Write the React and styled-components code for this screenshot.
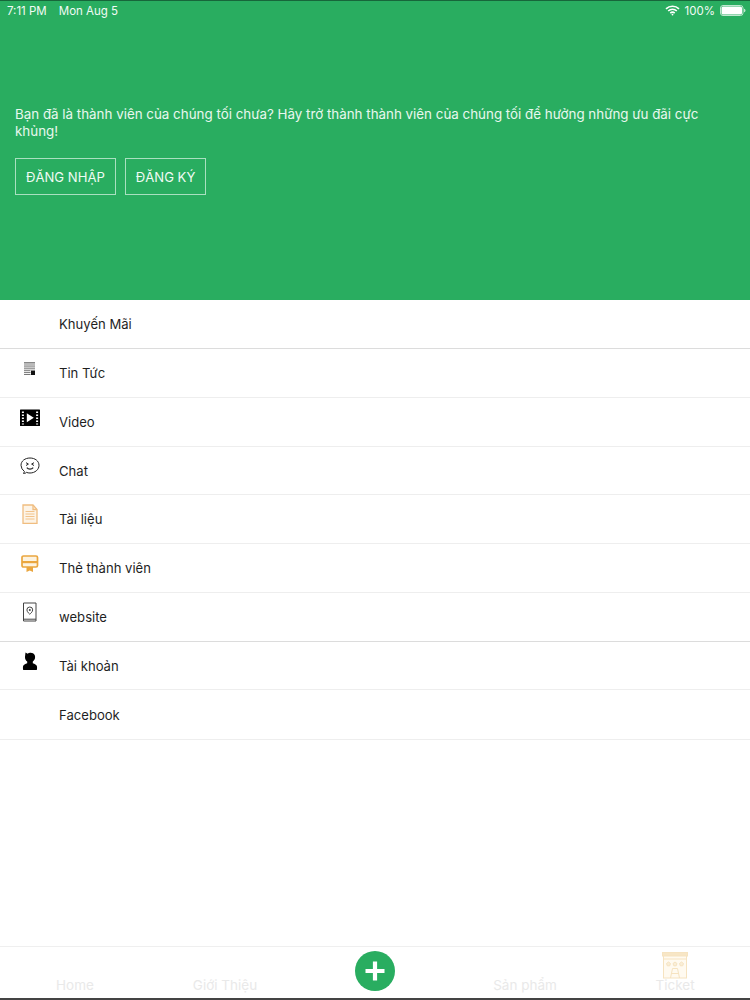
import React from "react";
import styled, { createGlobalStyle } from "styled-components";

const Global = createGlobalStyle`
  html, body { margin: 0; padding: 0; background: #fff; }
  * { box-sizing: border-box; }
`;
const Page = styled.div`
  width: 750px; height: 1000px; display: flex; flex-direction: column; overflow: hidden;
  font-family: "Inter", "Liberation Sans", sans-serif; background: #fff;
`;
const Hero = styled.header`
  height: 300px; flex: none; background: #29ad60; color: #fff; display: flex; flex-direction: column;
  border-top: 1px solid #17663a;
`;
const StatusBar = styled.div`
  height: 19px; padding: 0 4px 0 7px; display: flex; align-items: center; justify-content: space-between;
  font-size: 11.5px; color: #f1fbf5;
`;
const StatusGroup = styled.div`
  display: flex; align-items: center; gap: ${p => p.$gap}px;
`;
const Intro = styled.div`
  padding: 86px 15px 0;
`;
const Message = styled.p`
  margin: 0; font-size: 13.36px; line-height: 17px; color: #e9f8ef;
`;
const Actions = styled.div`
  display: flex; gap: 9px; margin-top: 18px;
`;
const OutlineButton = styled.button`
  height: 37px; padding: 0 10px; background: transparent; border: 1px solid #a9e0c0; color: #f0fbf4;
  font: inherit; font-size: 13.1px;
`;
const Menu = styled.nav`
  flex: 1; display: flex; flex-direction: column;
`;
const Row = styled.div`
  height: ${p => p.$h || 49}px; flex: none; display: flex; align-items: center; padding-left: 59px; position: relative;
  border-bottom: 1px solid ${p => p.$line || "#eeeeee"};
  font-size: 13.1px; color: #1f1f1f;
`;
const RowIcon = styled.span`
  position: absolute; left: 20px; top: ${p => p.$top}px; width: 20px; height: 20px; display: block;
  svg { display: block; width: 100%; height: 100%; }
`;
const TabBar = styled.footer`
  height: 54px; flex: none; display: grid; grid-template-columns: repeat(5, 150px);
  border-top: 1px solid #efefef; border-bottom: 2px solid #444; background: #fff; position: relative;
`;
const Tab = styled.div`
  display: flex; align-items: flex-end; justify-content: center; padding-bottom: 5px;
  font-size: 13.5px; color: #e9e9e9; position: relative;
`;
const Fab = styled.div`
  position: absolute; left: 55px; top: 4px; width: 40px; height: 40px; border-radius: 50%; background: #29ad60;
  display: flex; align-items: center; justify-content: center;
`;
const TicketIcon = styled.svg`
  position: absolute; left: 62px; top: 5px; width: 26px; height: 27px;
`;

const Wifi = () => (
  <svg width="15" height="11" viewBox="0 0 15 11" fill="none" stroke="#fff" strokeWidth="1.6">
    <path d="M1 3.8a9.4 9.4 0 0 1 13 0" />
    <path d="M3.2 6a6.2 6.2 0 0 1 8.6 0" />
    <path d="M5.3 8.1a3.2 3.2 0 0 1 4.4 0" />
    <circle cx="7.5" cy="9.6" r="0.9" fill="#fff" stroke="none" />
  </svg>
);
const Battery = () => (
  <svg width="26" height="11" viewBox="0 0 26 11">
    <rect x="0.5" y="0.5" width="22.5" height="10" rx="2.5" fill="none" stroke="#bfe8d0" />
    <rect x="1.5" y="1.5" width="20.5" height="8" rx="1.5" fill="#fff" />
    <path d="M24 3.8c1 .2 1.5.9 1.5 1.700s-.5 1.500-1.500 1.700z" fill="#bfe8d0" />
  </svg>
);
const News = () => (
  <svg viewBox="0 0 20 20">
    <rect x="4" y="1" width="11" height="1.600" fill="#888" />
    <path d="M4 4h11M4 5.900h11M4 7.800h11M4 9.700h6.500M4 11.600h6.500M4 13.500h6.500" stroke="#777" strokeWidth="1" />
    <rect x="11" y="9.500" width="4" height="4.500" fill="#111" />
  </svg>
);
const Film = () => (
  <svg viewBox="0 0 20 20">
    <rect x="0" y="1.500" width="20" height="16.500" rx="0.500" fill="#000" />
    <path d="M2.900 3.500v13M17.100 3.500v13" stroke="#fff" strokeWidth="2" strokeDasharray="1.500 1.500" />
    <path d="M6.800 5.300l7 4.500-7 4.500z" fill="#fff" />
  </svg>
);
const ChatFace = () => (
  <svg viewBox="0 0 20 20" fill="none" stroke="#222" strokeWidth="1">
    <path d="M3.300 17.200c1-.5 1.300-1 1.100-1.700A8.300 8.300 0 0 1 1 9.300C1 5 5 2 10 2s9 3 9 7.300-4 7.700-9 7.700c-1.200 0-2.500-.2-3.600-.6" />
    <path d="M3.300 17.200c1 .4 2.200.2 3.100-.8" />
    <path d="M6 6.700l2.400 1.400L6 9.500M14 6.700l-2.400 1.400 2.400 1.400" />
    <path d="M6.800 11.600c1.600 1.900 4.800 1.900 6.400 0" strokeWidth="1.200" />
  </svg>
);
const Doc = () => (
  <svg viewBox="0 0 20 20" fill="#fdf4e7" stroke="#f0bd80" strokeWidth="1.300">
    <path d="M3 1h10l4 4.500v13.800H3z" />
    <path d="M13 1v4.500h4" fill="none" />
    <path d="M5.500 7.500h9M5.500 10h9M5.500 12.500h9M5.500 15h9" strokeWidth="0.900" />
  </svg>
);
const Card = () => (
  <svg viewBox="0 0 20 20">
    <rect x="2" y="2" width="15.500" height="11" rx="1.500" fill="#fdf3e0" stroke="#eaa63f" strokeWidth="1.700" />
    <rect x="2" y="7" width="15.500" height="2.200" fill="#eaa63f" />
    <path d="M6.500 13h6.500v5l-3.200-1.500L6.500 18z" fill="#eaa63f" />
  </svg>
);
const PhonePin = () => (
  <svg viewBox="0 0 20 20" fill="none" stroke="#444" strokeWidth="1">
    <path d="M3.500 1h12.500v18H3.500zM3.500 17.200h12.500" />
    <path d="M9.800 5a2.900 2.900 0 0 1 2.900 2.900c0 2.100-2.900 4.300-2.900 4.300s-2.900-2.200-2.900-4.300A2.900 2.900 0 0 1 9.800 5z" />
    <circle cx="9.800" cy="7.900" r="1" fill="#444" stroke="none" />
  </svg>
);
const Person = () => (
  <svg viewBox="0 0 20 20">
    <path d="M5.500 1.500l2.200 1.300C8.800 1.700 11.300 1.300 13 2.300c1.800 1 2.600 3.300 1.900 5.400-.4 1.200-1.300 2.200-2.100 2.800v1.700c1.800.7 3.800 1.500 4.200 3.300.2 1 .1 2.500-.2 3.500H3.200c-.3-1-.4-2.500-.2-3.500.4-1.800 2.400-2.600 4.200-3.300v-1.700C5.800 9.500 4.800 7.700 5 5.700z" fill="#000" />
  </svg>
);
const Plus = () => (
  <svg width="22" height="22" viewBox="0 0 22 22"><path d="M11 1.500v19M1.500 11h19" stroke="#fff" strokeWidth="4.200" /></svg>
);
const Ticket = () => (
  <TicketIcon viewBox="0 0 26 27" fill="none" stroke="#f6e3c0" strokeWidth="1">
    <rect x="1.500" y="1" width="23" height="25" fill="#fffaf0" />
    <rect x="0.500" y="0.500" width="25" height="3.500" fill="#f7e6c6" />
    <path d="M1.500 7h23" />
    <path d="M6.500 10l2 1.500-.8 2.300h-2.400l-.8-2.300zM13 10l2 1.500-.8 2.300h-2.400l-.8-2.300zM19.500 10l2 1.500-.8 2.300h-2.400l-.8-2.300z" fill="#f9eed8" />
    <path d="M8.500 26l2-9.500h5l2 9.500M9.500 21.500h7" />
  </TicketIcon>
);

const items = [
  { label: "Khuyến Mãi", line: "#dcdcdc" },
  { label: "Tin Tức", icon: <News />, top: 12 },
  { label: "Video", icon: <Film />, top: 10 },
  { label: "Chat", icon: <ChatFace />, top: 9, h: 48 },
  { label: "Tài liệu", icon: <Doc />, top: 9 },
  { label: "Thẻ thành viên", icon: <Card />, top: 10 },
  { label: "website", icon: <PhonePin />, top: 9, line: "#dcdcdc" },
  { label: "Tài khoản", icon: <Person />, top: 9, h: 48 },
  { label: "Facebook", h: 50 },
];

export default function App() {
  return (
    <Page>
      <Global />
      <Hero>
        <StatusBar>
          <StatusGroup $gap={12}><span>7:11 PM</span><span>Mon Aug 5</span></StatusGroup>
          <StatusGroup $gap={5}><Wifi /><span>100%</span><Battery /></StatusGroup>
        </StatusBar>
        <Intro>
          <Message>Bạn đã là thành viên của chúng tối chưa? Hãy trở thành thành viên của chúng tối để hưởng những ưu đãi cực khủng!</Message>
          <Actions>
            <OutlineButton>ĐĂNG NHẬP</OutlineButton>
            <OutlineButton>ĐĂNG KÝ</OutlineButton>
          </Actions>
        </Intro>
      </Hero>
      <Menu>
        {items.map(it => (
          <Row key={it.label} $h={it.h} $line={it.line}>
            {it.icon && <RowIcon $top={it.top}>{it.icon}</RowIcon>}
            {it.label}
          </Row>
        ))}
      </Menu>
      <TabBar>
        <Tab>Home</Tab>
        <Tab>Giới Thiệu</Tab>
        <Tab><Fab><Plus /></Fab></Tab>
        <Tab>Sản phẩm</Tab>
        <Tab><Ticket />Ticket</Tab>
      </TabBar>
    </Page>
  );
}
